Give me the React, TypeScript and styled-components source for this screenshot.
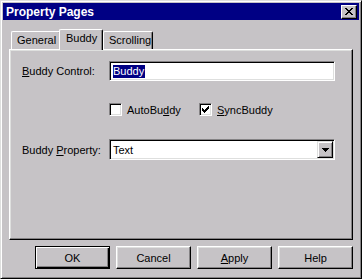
import React from 'react';
import styled, { createGlobalStyle } from 'styled-components';

const FACE = '#c6c3c6';
const SHADOW = '#848284';
const LIGHT = '#dedfde';
const NAVY = '#000084';

const GlobalStyle = createGlobalStyle`
  html, body {
    margin: 0;
    padding: 0;
    background: ${FACE};
  }
  body {
    font-family: "Liberation Sans", Arial, sans-serif;
    font-size: 11px;
    color: #000;
  }
`;

const Window = styled.div`
  width: 362px;
  height: 279px;
  box-sizing: border-box;
  background: ${FACE};
  border: 1px solid;
  border-color: ${LIGHT} #000 #000 ${LIGHT};
  box-shadow: inset 1px 1px #fff, inset -1px -1px ${SHADOW};
  padding: 2px;
  display: flex;
  flex-direction: column;
`;

const TitleBar = styled.div`
  height: 17px;
  background: ${NAVY};
  color: #fff;
  font-weight: bold;
  font-size: 12px;
  display: flex;
  align-items: center;
  justify-content: space-between;
  padding: 0 2px 0 3px;
`;

const CloseButton = styled.div`
  width: 16px;
  height: 14px;
  box-sizing: border-box;
  background: ${FACE};
  border: 1px solid;
  border-color: #fff #000 #000 #fff;
  box-shadow: inset -1px -1px ${SHADOW};
  display: flex;
  align-items: center;
  justify-content: center;
`;

const Body = styled.div`
  flex: 1;
  display: flex;
  flex-direction: column;
  padding: 9px 6px 0 6px;
`;

const TabList = styled.div`
  display: flex;
  align-items: flex-end;
  height: 20px;
  padding-left: 2px;
`;

const Tab = styled.div<{ $active?: boolean; $width: number; $pad: number }>`
  position: relative;
  box-sizing: border-box;
  width: ${(p) => p.$width}px;
  height: ${(p) => (p.$active ? 21 : 18)}px;
  margin-bottom: ${(p) => (p.$active ? -1 : 0)}px;
  z-index: ${(p) => (p.$active ? 2 : 0)};
  background: ${FACE};
  border-top: 1px solid #fff;
  border-left: 1px solid #fff;
  border-right: 1px solid #000;
  border-radius: 2px 2px 0 0;
  box-shadow: inset -1px 0 ${SHADOW};
  padding-left: ${(p) => p.$pad}px;
  padding-top: 2px;
  line-height: 13px;
`;

const Panel = styled.div`
  height: 191px;
  box-sizing: border-box;
  border: 1px solid;
  border-color: #fff #000 #000 #fff;
  box-shadow: inset -1px -1px ${SHADOW}, inset 1px 1px ${LIGHT};
  padding: 11px 0 0 12px;
  display: flex;
  flex-direction: column;
`;

const Row = styled.div<{ $gap: number }>`
  display: flex;
  align-items: center;
  margin-top: ${(p) => p.$gap}px;
`;

const Label = styled.div`
  width: 87px;
`;

const Sunken = styled.div<{ $height: number }>`
  width: 226px;
  height: ${(p) => p.$height}px;
  box-sizing: border-box;
  background: #fff;
  border: 1px solid;
  border-color: ${SHADOW} #fff #fff ${SHADOW};
  box-shadow: inset 1px 1px #000, inset -1px -1px ${LIGHT};
  display: flex;
  align-items: center;
  padding: 2px 2px 2px 3px;
`;

const Selected = styled.span`
  background: ${NAVY};
  color: #fff;
  line-height: 13px;
  padding: 0 1px 0 0;
`;

const ComboText = styled.span`
  flex: 1;
`;

const DropButton = styled.div`
  width: 16px;
  height: 17px;
  box-sizing: border-box;
  background: ${FACE};
  border: 1px solid;
  border-color: ${LIGHT} #000 #000 ${LIGHT};
  box-shadow: inset 1px 1px #fff, inset -1px -1px ${SHADOW};
  display: flex;
  align-items: center;
  justify-content: center;
  margin-right: -1px;
`;

const CheckGroup = styled.div`
  display: flex;
  margin-left: 87px;
`;

const CheckItem = styled.label<{ $width: number }>`
  display: flex;
  align-items: center;
  gap: 5px;
  width: ${(p) => p.$width}px;
`;

const CheckBox = styled.span`
  width: 13px;
  height: 13px;
  box-sizing: border-box;
  background: #fff;
  border: 1px solid;
  border-color: ${SHADOW} #fff #fff ${SHADOW};
  box-shadow: inset 1px 1px #000, inset -1px -1px ${LIGHT};
  display: flex;
  align-items: center;
  justify-content: center;
`;

const Footer = styled.div`
  display: flex;
  justify-content: flex-end;
  gap: 6px;
  margin-top: 6px;
`;

const Button = styled.div<{ $default?: boolean }>`
  width: 75px;
  height: 23px;
  box-sizing: border-box;
  background: ${FACE};
  border: 1px solid;
  display: flex;
  align-items: center;
  justify-content: center;
  ${(p) =>
    p.$default
      ? `border-color: #000;
         box-shadow: inset 1px 1px #fff, inset -1px -1px #000, inset -2px -2px ${SHADOW};`
      : `border-color: #fff #000 #000 #fff;
         box-shadow: inset -1px -1px ${SHADOW}, inset 1px 1px ${LIGHT};`}
`;

const closePath = (() => {
  const rows = [
    [0, 1, 6, 7],
    [1, 2, 5, 6],
    [2, 3, 4, 5],
    [3, 4],
    [2, 3, 4, 5],
    [1, 2, 5, 6],
    [0, 1, 6, 7],
  ];
  return rows
    .map((cols, y) => cols.map((x) => `M${x} ${y}h1v1h-1z`).join(''))
    .join('');
})();

const checkPath = [2, 3, 4, 3, 2, 1, 0]
  .map((top, x) => `M${x} ${top}h1v3h-1z`)
  .join('');

const CloseIcon = () => (
  <svg width="8" height="7" viewBox="0 0 8 7" shapeRendering="crispEdges">
    <path d={closePath} fill="#000" />
  </svg>
);

const CheckMark = () => (
  <svg width="7" height="7" viewBox="0 0 7 7" shapeRendering="crispEdges">
    <path d={checkPath} fill="#000" />
  </svg>
);

const ArrowDown = () => (
  <svg width="7" height="4" viewBox="0 0 7 4" shapeRendering="crispEdges">
    <path d="M0 0h7v1h-1v1h-1v1h-1v1h-1v-1h-1v-1h-1v-1h-1z" fill="#000" />
  </svg>
);

export default function App() {
  return (
    <>
      <GlobalStyle />
      <Window>
        <TitleBar>
          <span>Property Pages</span>
          <CloseButton>
            <CloseIcon />
          </CloseButton>
        </TitleBar>
        <Body>
          <TabList>
            <Tab $width={50} $pad={5} style={{ marginRight: -2 }}>
              General
            </Tab>
            <Tab $active $width={44} $pad={6}>
              Buddy
            </Tab>
            <Tab $width={50} $pad={5}>
              Scrolling
            </Tab>
          </TabList>
          <Panel>
            <Row $gap={0}>
              <Label>
                <u>B</u>uddy Control:
              </Label>
              <Sunken $height={20}>
                <Selected>Buddy</Selected>
              </Sunken>
            </Row>
            <Row $gap={22}>
              <CheckGroup>
                <CheckItem $width={90}>
                  <CheckBox />
                  <span>
                    AutoBu<u>d</u>dy
                  </span>
                </CheckItem>
                <CheckItem $width={90}>
                  <CheckBox>
                    <CheckMark />
                  </CheckBox>
                  <span>
                    <u>S</u>yncBuddy
                  </span>
                </CheckItem>
              </CheckGroup>
            </Row>
            <Row $gap={23}>
              <Label>
                Buddy <u>P</u>roperty:
              </Label>
              <Sunken $height={21}>
                <ComboText>Text</ComboText>
                <DropButton>
                  <ArrowDown />
                </DropButton>
              </Sunken>
            </Row>
          </Panel>
          <Footer>
            <Button $default>OK</Button>
            <Button>Cancel</Button>
            <Button>
              <span>
                <u>A</u>pply
              </span>
            </Button>
            <Button>Help</Button>
          </Footer>
        </Body>
      </Window>
    </>
  );
}
